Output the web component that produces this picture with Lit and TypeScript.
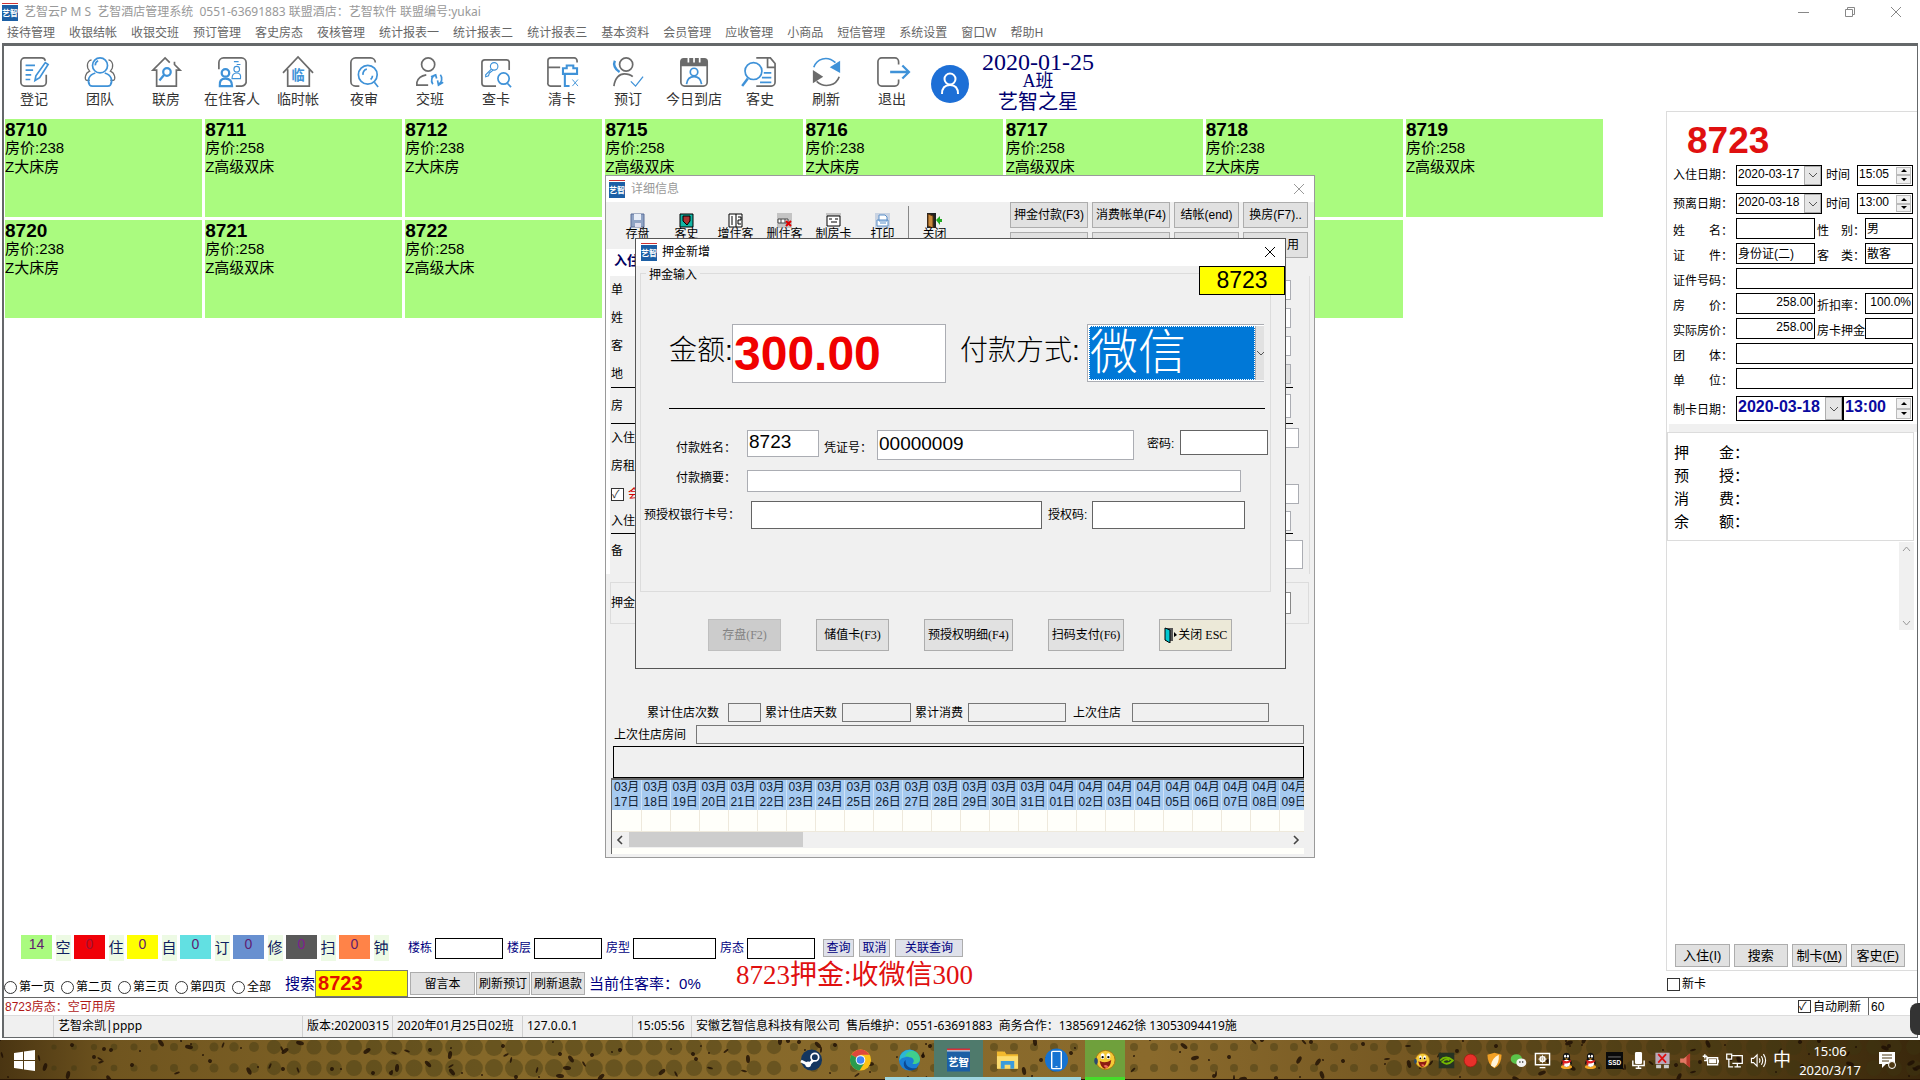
import { LitElement, html, svg, css, nothing } from "lit";
import { customElement } from "lit/decorators.js";
import { classMap } from "lit/directives/class-map.js";

const G = "#6b6b6b";
const B = "#3f92d8";

const menus = ["接待管理", "收银结帐", "收银交班", "预订管理", "客史房态", "夜核管理", "统计报表一", "统计报表二", "统计报表三", "基本资料", "会员管理", "应收管理", "小商品", "短信管理", "系统设置", "窗口W", "帮助H"];

const tools = [
  { label: "登记", art: svg`
    <path stroke=${G} d="M29 19V27a4 4 0 0 1-4 4H6a4 4 0 0 1-4-4V5a4 4 0 0 1 4-4H24a4 4 0 0 1 4 3"/>
    <path stroke=${B} d="M7 9H17M7 14H15M7 19H13M7 24H12M28 6l3 2-9 14-5 3 1-5z"/>` },
  { label: "团队", art: svg`
    <path stroke=${G} stroke-width="1.3" d="M7 3C2 4 1 11 5 15 0 17-1 24 2 25H5M25 3c5 1 6 8 2 12 5 2 6 9 3 10H27"/>
    <circle stroke=${B} cx="16" cy="9" r="8"/>
    <path stroke=${B} d="M11 17c-7 2-9 8-6 13q1 1 3 1H24q2 0 3-1c3-5 1-11-6-13M11 9a5 5 0 0 1 3-5"/>` },
  { label: "联房", art: svg`
    <path stroke=${G} d="M20 6 15 1 2 14H6V31H27V14h4L25 8V5"/>
    <circle stroke=${B} stroke-width="2.4" cx="17" cy="16" r="4"/>
    <path stroke=${B} stroke-width="2.4" d="M14 19l-5 6"/>` },
  { label: "在住客人", art: svg`
    <path stroke=${G} d="M2 13V6a5 5 0 0 1 5-5H26a5 5 0 0 1 5 5V25a5 5 0 0 1-5 6H20"/>
    <circle stroke=${B} stroke-width="2.4" cx="9" cy="17" r="4"/>
    <path stroke=${B} stroke-width="2.4" d="M3 31q-1-8 6-8t7 8z"/>
    <path stroke=${B} stroke-width="1.2" d="M16 23q0-6 5-6t4 6zM18 5h5M21 8h4"/>
    <circle stroke=${B} stroke-width="1.2" cx="21" cy="13" r="3"/>` },
  { label: "临时帐", art: svg`
    <path stroke=${G} d="M0 17 16 0l16 17M5 13V31H28V13"/>
    <text x="9" y="25" font-size="14" font-weight="700" fill=${B} stroke="none">临</text>` },
  { label: "夜审", art: svg`
    <path stroke=${G} d="M11 31H7a5 5 0 0 1-5-5V6a5 5 0 0 1 5-5H23a5 5 0 0 1 5 5"/>
    <circle stroke=${B} cx="20" cy="19" r="10"/>
    <path stroke=${B} d="M27 27l4 5M15 19a5 5 0 0 1 4-6M25 20a5 5 0 0 1-2 4"/>` },
  { label: "交班", art: svg`
    <circle stroke=${G} cx="14" cy="8" r="7"/>
    <path stroke=${G} d="M12 19C6 20 3 23 2 27V30H14"/>
    <path stroke=${B} d="M19 29a5 6 0 0 1 3-10M17 21l5-2 1 4M27 19a5 6 0 0 1-2 10M30 27l-5 3-1-5"/>` },
  { label: "查卡", art: svg`
    <path stroke=${G} d="M30 14V5a3 3 0 0 0-3-2H4a3 3 0 0 0-3 3V28a3 3 0 0 0 3 3H16"/>
    <circle stroke=${B} cx="24" cy="23" r="6"/>
    <path stroke=${B} d="M28 28l4 4"/>
    <circle stroke=${B} stroke-width="1.2" cx="14" cy="10" r="4"/>
    <path stroke=${B} stroke-width="1.2" d="M11 13l-6 6v2l3-1 1-3 4-3"/>` },
  { label: "清卡", art: svg`
    <path stroke=${G} d="M32 6V4a3 3 0 0 0-3-3H4a3 3 0 0 0-3 3V27a3 3 0 0 0 3 4H15M1 11H14"/>
    <path stroke=${B} stroke-width="2.2" d="M17 18V12h4V9h7v3h4v6zM19 18V31h5"/>
    <path stroke=${B} stroke-width="1" d="M27 24l6 7M33 24l-6 7"/>` },
  { label: "预订", art: svg`
    <circle stroke=${G} cx="14" cy="8" r="7"/>
    <path stroke=${G} d="M1 31C2 22 7 18 12 18q6 0 9 3"/>
    <path stroke=${B} stroke-width="2.6" d="M2 4C0 8 2 13 7 16"/>
    <path stroke=${B} stroke-width="1.4" d="M19 26l5 5 8-10"/>` },
  { label: "今日到店", art: svg`
    <path stroke=${G} d="M2 8V27a4 4 0 0 0 4 4H26a4 4 0 0 0 4-4V8"/>
    <path fill=${G} stroke=${G} d="M2 9V5q0-3 3-3H27q3 0 3 3V9z"/>
    <path stroke="#fff" d="M10 0V6M16 0V6M22 0V6"/>
    <circle stroke=${B} cx="16" cy="16" r="4"/>
    <path stroke=${B} d="M8 29q1-8 8-8t8 8"/>` },
  { label: "客史", art: svg`
    <path stroke=${G} d="M12 1H27M12 31H28a4 4 0 0 0 4-4V11H24V1H27l5 6v5"/>
    <circle stroke=${B} cx="9" cy="15" r="9"/>
    <path stroke=${B} stroke-width="2.6" d="M3 23l-6 8"/>
    <path stroke=${B} d="M20 17h8M18 22h10M16 27h12"/>` },
  { label: "刷新", art: svg`
    <path stroke=${B} d="M3 11C6 2 17-2 26 6"/><path fill=${B} stroke="none" d="M31 4V17L20 11z"/>
    <path stroke=${G} d="M30 21C27 30 15 34 6 26"/><path fill=${G} stroke="none" d="M2 28V14l11 7z"/>` },
  { label: "退出", art: svg`
    <path stroke=${G} d="M23 8V5a4 4 0 0 0-4-4H5a4 4 0 0 0-4 4V27a4 4 0 0 0 4 4H19a4 4 0 0 0 4-4V24"/>
    <path stroke=${B} stroke-width="2.4" d="M14 16H33M27 9l7 7-7 7"/>` },
];

const rooms: { no?: string; price?: string; kind?: string }[] = [
  { no: "8710", price: "238", kind: "Z大床房" },
  { no: "8711", price: "258", kind: "Z高级双床" },
  { no: "8712", price: "238", kind: "Z大床房" },
  { no: "8715", price: "258", kind: "Z高级双床" },
  { no: "8716", price: "238", kind: "Z大床房" },
  { no: "8717", price: "258", kind: "Z高级双床" },
  { no: "8718", price: "238", kind: "Z大床房" },
  { no: "8719", price: "258", kind: "Z高级双床" },
  { no: "8720", price: "238", kind: "Z大床房" },
  { no: "8721", price: "258", kind: "Z高级双床" },
  { no: "8722", price: "258", kind: "Z高级大床" },
  {}, {}, {}, {},
];

const legend = [
  ["14", "空", "green"], ["0", "住", "red"], ["0", "自", "yellow"], ["0", "订", "cyan"],
  ["0", "修", "blue"], ["0", "扫", "dark"], ["0", "钟", "orange"],
];

const days = Array.from({ length: 24 }, (_, i) => {
  const d = 17 + i;
  return d <= 31 ? ["03月", `${d}日`] : ["04月", `${String(d - 31).padStart(2, "0")}日`];
});

const caretDown = svg`<path d="M1 3l4 4 4-4" fill="none" stroke="#555"/>`;

const sheet = css`
  * { box-sizing: border-box; }
  button, input, select { font: inherit; color: inherit; margin: 0; padding: 0; border-radius: 0; }
  input { background: #fff; outline: none; min-width: 0; }
  .btn { background: #e1e1e1; border: 1px solid #adadad; white-space: nowrap; text-align: center; line-height: 16px; }
  .brand { width: 16px; height: 18px; flex: none; display: block; }
  svg { display: block; flex: none; }
`;

const brand = html`<svg class="brand" viewBox="0 0 16 18"><rect width="16" height="18" fill="#1c5fa5"/><rect width="16" height="2" fill="#c33"/><rect y="1" width="16" height="1" fill="#fff"/><text x="8" y="13" font-size="8" font-weight="700" text-anchor="middle" fill="#fff">艺智</text></svg>`;
const cross = html`<svg width="12" height="12" viewBox="0 0 12 12"><path d="M1 1l10 10M11 1 1 11" stroke="currentColor" fill="none"/></svg>`;

@customElement("deposit-dialog")
class DepositDialog extends LitElement {
  static styles = [sheet, css`
    :host { display: flex; flex-direction: column; background: #f0f0f0; border: 1px solid #555; font-size: 12px; line-height: 14px; }
    .title { display: flex; align-items: center; gap: 5px; height: 27px; padding: 0 9px 2px 5px; background: #fff; font-size: 12px; }
    .title span { flex: 1; }
    .close { border: 0; background: none; }
    .group { margin: 0 14px 0 4px; padding: 44px 0 0; height: 326px; border: 1px solid #dcdcdc; min-width: 0; }
    .group legend { padding: 2px 3px 0; margin-left: 5px; height: 14px; }
    .tag { position: absolute; right: 0; top: 27px; width: 86px; height: 29px; background: #ff0; border: 1px solid #000; font-size: 23px; line-height: 27px; text-align: center; }
    .row { display: flex; align-items: flex-start; }
    .row input { border: 1px solid #abadb3; }
    .row .dark { border-color: #646464; }
    .row label { flex: none; line-height: 32px; white-space: nowrap; }
    .big { margin-left: 28px; }
    .big label { font-size: 28px; line-height: 54px; font-weight: 300; }
    .amountL { width: 63px; }
    .methodL { width: 127px; margin-left: 14px; }
    .big .amount { width: 214px; height: 59px; font-size: 48px; font-weight: 700; color: #f00000; padding-left: 1px; }
    .method { width: 177px; height: 58px; border: 1px solid #abadb3; border-right: 0; background: #fff; padding: 1px 0; display: flex; }
    .method select { appearance: none; width: 166px; margin-left: 1px; height: 54px; border: 1px dotted #fff; background: #0078d7; color: #fff; font-size: 48px; font-weight: 300; line-height: 50px; outline: none; padding: 0; }
    .method i { flex: 1; background: #e1e1e1; border-left: 1px solid #abadb3; display: flex; align-items: center; overflow: hidden; }
    .rule { border: 0; height: 1px; background: #000; margin: 25px 5px 0 28px; }
    .r1 { margin: 21px 0 0 35px; height: 31px; }
    .r1 label { line-height: 36px; }
    .r2 { margin: 9px 0 0 35px; height: 22px; }
    .r2 label { line-height: 16px; }
    .r3 { margin: 9px 0 0 3px; height: 28px; }
    .r3 label { line-height: 28px; }
    .l71 { width: 71px; }
    .r1 input { font-size: 19px; padding: 0 0 3px 1px; }
    .name { width: 72px; height: 27px; margin-right: 5px; }
    .l53 { width: 53px; }
    .voucher { width: 257px; height: 30px; margin-right: 13px; }
    .l33 { width: 33px; }
    .r1 .l33 { line-height: 28px; }
    .pwd { width: 88px; height: 25px; }
    .memo { width: 494px; height: 22px; }
    .l107 { width: 107px; }
    .card { width: 291px; height: 28px; margin-right: 6px; }
    .l44 { width: 44px; }
    .auth { width: 153px; height: 28px; }
    .foot { display: flex; gap: 35px; padding: 27px 0 0 72px; }
    .foot .btn { height: 32px; padding: 0 3px; min-width: 73px; font-family: "Liberation Serif", "Noto Sans CJK SC", serif; display: flex; align-items: center; justify-content: center; }
    .foot .off { background: #ccc; border-color: #bfbfbf; color: #838383; }
    .foot .esc { background: #ece9d8; }
  `];
  render() {
    return html`
      <div class="title">${brand}<span>押金新增</span><button class="close" aria-label="关闭">${cross}</button></div>
      <div class="tag">8723</div>
      <fieldset class="group">
        <legend>押金输入</legend>
        <div class="row big">
          <label class="amountL" for="amount">金额:</label><input class="amount" id="amount" value="300.00">
          <label class="methodL" for="method">付款方式:</label>
          <div class="method"><select id="method"><option>微信</option></select><i><svg width="10" height="10" viewBox="0 0 10 10">${caretDown}</svg></i></div>
        </div>
        <hr class="rule">
        <div class="row r1">
          <label class="l71" for="pn">付款姓名：</label><input class="name" id="pn" value="8723">
          <label class="l53" for="vn">凭证号：</label><input class="voucher" id="vn" value="00000009">
          <label class="l33" for="pw">密码:</label><input class="pwd dark" id="pw" type="password">
        </div>
        <div class="row r2"><label class="l71" for="memo">付款摘要：</label><input class="memo" id="memo"></div>
        <div class="row r3">
          <label class="l107" for="card">预授权银行卡号：</label><input class="card dark" id="card">
          <label class="l44" for="auth">授权码:</label><input class="auth dark" id="auth">
        </div>
      </fieldset>
      <div class="foot">
        <button class="btn off" disabled>存盘(F2)</button><button class="btn">储值卡(F3)</button><button class="btn">预授权明细(F4)</button><button class="btn">扫码支付(F6)</button>
        <button class="btn esc"><svg width="14" height="16" viewBox="0 0 14 16"><path fill="#555" d="M1 1h8v13H1z"/><path fill="#00c8d0" stroke="#000" d="M1 1l5 2v13l-5-3z"/><path fill="#000" d="M10 5l3 3-3 2z"/></svg>关闭 ESC</button>
      </div>`;
  }
}

const dlgTools = [
  ["存盘", svg`<path fill="#8fa3c4" stroke="#5a6f99" d="M1 1h13v13H1z"/><path fill="#e8eef8" d="M4 1h7v6H4z"/><path fill="#dde" d="M5 10h6v4H5z"/>`],
  ["客史", svg`<path fill="#10b5a5" stroke="#000" d="M1 1h13v13H1z"/><path fill="#a33" stroke="#000" d="M4 3h7v5l-3 4-4-4z"/>`],
  ["增住客", svg`<path fill="#fff" stroke="#000" d="M1 1h13v13H1zM8 1v13M4 3v9M10 4h3v3h-3v4h3"/>`],
  ["删住客", svg`<path fill="#c4c4c4" d="M0 0h15v15H0z"/><path fill="#fff" stroke="#444" d="M1 6h10v4H1zM4 6v4M8 6v4"/><path stroke="#d00" stroke-width="2" d="M9 8l5 5M14 8l-5 5"/>`],
  ["制房卡", svg`<path fill="#c4c4c4" d="M0 0h15v3H0z"/><path fill="#fff" stroke="#000" d="M1 3h13v10H1z"/><path stroke="#000" d="M3 6h3M9 6h3M5 9h6"/>`],
  ["打印", svg`<path fill="#c9d3e2" d="M0 0h15v15H0z"/><path fill="#fff" stroke="#5b8fc9" d="M4 2h6l2 2v4H4zM2 7h11v6H2z"/><path stroke="#5b8fc9" d="M5 10h6"/>`],
  ["关闭", svg`<path fill="#222" d="M0 0h9v15H0z"/><path fill="#c98a3c" stroke="#5a3510" d="M1 1l5 2v12l-5-2z"/><path fill="#2a2" d="M9 7l4-4v3h2v3h-2v3z"/>`],
] as const;

const formRows: [string, string][] = [
  ["单", "h28"], ["姓", "h28"], ["客", "h28"], ["地", "h28 line gray"], ["房", "h36 line"],
  ["入住", "h28 w7"], ["房租", "h28 none"], ["会", "h28 w8 check"], ["入住", "h26 line"], ["备", "h40 w11"],
];

@customElement("detail-dialog")
class DetailDialog extends LitElement {
  static styles = [sheet, css`
    :host { display: flex; flex-direction: column; background: #f0f0f0; border: 1px solid #9a9a9a; font-size: 12px; line-height: 14px; }
    .title { display: flex; align-items: center; gap: 6px; height: 26px; padding: 0 9px 1px 3px; background: #fff; color: #999; }
    .title span { flex: 1; }
    .close { border: 0; background: none; }
    .bar { display: flex; height: 47px; padding: 0 6px 0 7px; }
    .tools { display: flex; flex: 1; padding-top: 11px; }
    .tools button { width: 49px; border: 0; background: none; display: flex; flex-direction: column; align-items: center; justify-content: flex-start; gap: 0; line-height: 13px; white-space: nowrap; }
    .sep { width: 1px; margin: -7px 1px 0; height: 46px; background: #888; }
    .actions { display: grid; grid-template-columns: 78px 78px 65px 65px; grid-auto-rows: 26px; gap: 4px; height: 46px; }
    .actions .btn { padding: 0; height: 26px; }
    .actions .end { text-align: right; padding-right: 8px; }
    .tabs { background: #fff; height: 27px; padding: 4px 8px; color: #000060; font-weight: 700; line-height: 16px; font-size: 13px; margin-right: 650px; white-space: nowrap; }
    .panel { margin: 0 4px 0 0; border-right: 1px solid #dcdcdc; border-left: 4px solid #fff; padding: 0 16px 0 1px; }
    .line1 { display: flex; align-items: center; padding-right: 2px; }
    .line1 span { width: 90px; display: flex; align-items: center; gap: 4px; }
    .line1 input.f { flex: 1; height: 20px; border: 1px solid #abadb3; }
    .h28 { height: 28px; } .h26 { height: 26px; } .h36 { height: 36px; } .h40 { height: 40px; }
    .h36 input.f { height: 24px; } .h40 input.f { height: 29px; }
    .h40 span { align-self: flex-start; padding-top: 10px; }
    .line { border-bottom: 1px solid #000; }
    .gray input.f { background: #e1e1e1; }
    .w7, .w8, .w11 { padding-right: 0; margin-right: -6px; }
    .w11 { margin-right: -10px; }
    .none input.f { visibility: hidden; }
    .check span { color: #d00000; }
    .check input[type=checkbox] { width: 13px; height: 13px; appearance: none; border: 1px solid #333; display: grid; }
    .check input[type=checkbox]::after { content: "✓"; color: #333; font-size: 11px; line-height: 11px; }
    .dep { display: flex; align-items: center; height: 42px; margin: 8px 5px 79px 4px; border: 1px solid #dcdcdc; padding: 0 17px 0 0; }
    .dep label { flex: none; width: 90px; } .dep input { flex: 1; height: 22px; border: 1px solid #888; }
    .stats { display: flex; align-items: center; padding-left: 41px; height: 19px; }
    .stats input, .last input { height: 19px; border: 1px solid #777; background: #f0f0f0; }
    .stats label { flex: none; margin: 0 5px 0 4px; }
    .stats .a { margin-right: 9px; margin-left: 0; }
    .stats .d { margin: 0 11px 0 7px; }
    .s1 { width: 33px; } .s2 { width: 69px; } .s3 { width: 98px; } .s4 { width: 137px; }
    .last { display: flex; align-items: center; height: 19px; margin: 3px 10px 0 8px; }
    .last label { width: 82px; } .last input { flex: 1; }
    .note { height: 32px; margin: 2px 10px 0 7px; border: 1px solid #000; }
    .cal { margin: 0 10px 3px 5px; border: 1px solid #666; border-width: 2px 0 0 1px; overflow: hidden; background: #fffffa; flex: 1; }
    table { border-collapse: collapse; table-layout: fixed; width: 696px; }
    th { background: #a6caf0; font: inherit; font-size: 12px; line-height: 15px; padding: 0; height: 30px; width: 29px; border-right: 1px solid #cfe2f6; white-space: nowrap; text-align: left; padding-left: 2px; color: #102030; }
    td { height: 21px; border-right: 1px solid #eee9dc; border-bottom: 1px solid #eee9dc; padding: 0; }
    .scroll { display: flex; justify-content: space-between; align-items: center; background: #f0f0f0; height: 16px; padding: 0 4px; }
    .thumb { width: 174px; height: 15px; background: #cdcdcd; margin: 0 auto 0 5px; }
  `];
  render() {
    return html`
      <div class="title">${brand}<span>详细信息</span><button class="close" aria-label="关闭">${cross}</button></div>
      <div class="bar">
        <div class="tools">${dlgTools.map(([t, a], i) => html`${i === 6 ? html`<div class="sep"></div>` : nothing}<button><svg width="15" height="15" viewBox="0 0 15 15" fill="none">${a}</svg>${t}</button>`)}</div>
        <div class="actions"><button class="btn">押金付款(F3)</button><button class="btn">消费帐单(F4)</button><button class="btn">结帐(end)</button><button class="btn">换房(F7)..</button>
          <button class="btn"></button><button class="btn"></button><button class="btn"></button><button class="btn end">用</button></div>
      </div>
      <div class="tabs">入住</div>
      <div class="panel">
        ${formRows.map(([t, c]) => html`<label class="line1 ${c}"><span>${c.includes("check") ? html`<input type="checkbox" checked>` : nothing}${t}</span><input class="f"></label>`)}
      </div>
      <div class="dep"><label for="dep">押金</label><input id="dep"></div>
      <div class="stats">
        <label class="a" for="s1">累计住店次数</label><input class="s1" id="s1" readonly><label for="s2">累计住店天数</label><input class="s2" id="s2" readonly><label for="s3">累计消费</label><input class="s3" id="s3" readonly><label class="d" for="s4">上次住店</label><input class="s4" id="s4" readonly>
      </div>
      <div class="last"><label for="last">上次住店房间</label><input id="last" readonly></div>
      <div class="note"></div>
      <div class="cal">
        <table><thead><tr>${days.map(([m, d]) => html`<th>${m}<br>${d}</th>`)}</tr></thead><tbody><tr>${days.map(() => html`<td></td>`)}</tr></tbody></table>
        <div class="scroll"><svg width="8" height="10" viewBox="0 0 8 10"><path d="M6 1 2 5l4 4" fill="none" stroke="#444" stroke-width="1.6"/></svg><div class="thumb"></div><svg width="8" height="10" viewBox="0 0 8 10"><path d="M2 1l4 4-4 4" fill="none" stroke="#444" stroke-width="1.6"/></svg></div>
      </div>`;
  }
}

@customElement("guest-panel")
class GuestPanel extends LitElement {
  static styles = [sheet, css`
    :host { display: flex; flex-direction: column; font-size: 12px; line-height: 14px; width: 251px; flex: none; padding-top: 65px; }
    .box { border: 1px solid #dcdcdc; border-right: 0; flex: 1; display: flex; flex-direction: column; }
    .room { font-size: 37px; line-height: 40px; font-weight: 700; color: #e01010; padding: 9px 0 0 20px; height: 52px; margin: 0; }
    .form { padding-left: 6px; padding-right: 4px; }
    .r { display: flex; align-items: center; height: 25px; }
    .r.t { height: 29px; padding-bottom: 7px; }
    .r.t:nth-child(2) { height: 25px; padding-bottom: 4px; }
    .r label { flex: none; width: 63px; white-space: nowrap; }
    .r label.s { width: 50px; padding-left: 2px; }
    .r label.tm { width: 35px; padding-left: 4px; }
    .r input { height: 21px; border: 1px solid #000; flex: 1; padding: 0 1px 3px; align-self: flex-start; }
    .r .m { flex: none; width: 79px; }
    .num { text-align: right; }
    .combo { display: flex; border: 1px solid #000; height: 21px; background: #fff; min-width: 0; }
    .r .combo input { border: 0; height: 19px; width: 0; flex: 1; }
    .combo.date { width: 86px; flex: none; }
    .combo.clock { flex: 1; }
    .dd { width: 17px; border: 1px solid #adadad; background: #e6e6e6; display: flex; align-items: center; justify-content: center; }
    .sp { width: 17px; flex: none; display: flex; flex-direction: column; padding: 1px; }
    .sp button { flex: 1; border: 1px solid #bbb; background: #f0f0f0; display: flex; align-items: center; justify-content: center; min-height: 0; }
    .r.make { margin-top: 3px; height: 27px; }
    .make .combo { height: 25px; align-self: flex-start; }
    .r.make .combo input { font-size: 16px; font-weight: 700; color: #0a0aa0; height: 22px; }
    .make .combo.date { width: 107px; }
    .band { height: 8px; background: #f0f0f0; margin: 1px 0 0 2px; }
    .sum { border: 1px solid #dcdcdc; margin: 0 3px 0 0; padding: 8px 0 7px 6px; font-size: 15px; line-height: 23px; }
    .list { flex: 1; display: flex; justify-content: flex-end; padding: 1px 3px 0 0; }
    .vs { width: 15px; height: 88px; background: #f0f0f0; display: flex; flex-direction: column; justify-content: space-between; align-items: center; padding: 4px 0; }
    .btns { display: flex; gap: 4px; padding: 0 12px 3px 8px; }
    .btns .btn { flex: 1; height: 23px; font-size: 13px; }
    .new { display: flex; align-items: center; gap: 2px; height: 26px; padding-left: 1px; }
    .new input { appearance: none; width: 13px; height: 13px; border: 1px solid #333; }
  `];
  date(id: string, v: string) {
    return html`<div class="combo date"><input id=${id} value=${v}><button class="dd" aria-label="选择日期"><svg width="10" height="10" viewBox="0 0 10 10">${caretDown}</svg></button></div>`;
  }
  clock(id: string, v: string) {
    return html`<div class="combo clock"><input id=${id} aria-label="时间" value=${v}><div class="sp"><button aria-label="增加"><svg width="6" height="3" viewBox="0 0 6 3"><path d="M0 3h6L3 0z"/></svg></button><button aria-label="减少"><svg width="6" height="3" viewBox="0 0 6 3"><path d="M0 0h6L3 3z"/></svg></button></div></div>`;
  }
  render() {
    const pair = (a: string, av: string, b: string, bv: string, num = false) => html`<div class="r"><label for=${"f" + a}>${a}</label><input class=${classMap({ m: true, num })} id=${"f" + a} value=${av}><label class="s" for=${"f" + b}>${b}</label><input class=${classMap({ num })} id=${"f" + b} value=${bv}></div>`;
    const one = (a: string) => html`<div class="r"><label for=${"f" + a}>${a}</label><input id=${"f" + a}></div>`;
    return html`
      <div class="box">
        <h1 class="room">8723</h1>
        <div class="form">
          <div class="r t"><label for="d1">入住日期：</label>${this.date("d1", "2020-03-17")}<label class="tm" for="t1">时间</label>${this.clock("t1", "15:05")}</div>
          <div class="r t"><label for="d2">预离日期：</label>${this.date("d2", "2020-03-18")}<label class="tm" for="t2">时间</label>${this.clock("t2", "13:00")}</div>
          ${pair("姓　　名：", "", "性　别：", "男")}
          ${pair("证　　件：", "身份证(二)", "客　类：", "散客")}
          ${one("证件号码：")}
          ${pair("房　　价：", "258.00", "折扣率：", "100.0%", true)}
          ${pair("实际房价：", "258.00", "房卡押金", "", true)}
          ${one("团　　体：")}
          ${one("单　　位：")}
          <div class="r make"><label for="d3">制卡日期：</label>${this.date("d3", "2020-03-18")}${this.clock("t3", "13:00")}</div>
        </div>
        <div class="band"></div>
        <div class="sum"><div>押　　金：</div><div>预　　授：</div><div>消　　费：</div><div>余　　额：</div></div>
        <div class="list"><div class="vs"><svg width="9" height="6" viewBox="0 0 9 6"><path d="M1 5l3.500-4L8 5" fill="none" stroke="#999"/></svg><svg width="9" height="6" viewBox="0 0 9 6"><path d="M1 1l3.500 4L8 1" fill="none" stroke="#999"/></svg></div></div>
        <div class="btns"><button class="btn">入住(I)</button><button class="btn">搜索</button><button class="btn">制卡(<u>M</u>)</button><button class="btn">客史(<u>F</u>)</button></div>
      </div>
      <label class="new"><input type="checkbox">新卡</label>`;
  }
}

const emoji = svg`<circle cx="12" cy="12" r="10" fill="#f5c936" stroke="#a87412"/><ellipse cx="9" cy="8" rx="2" ry="3" fill="#fff"/><ellipse cx="15" cy="8" rx="2" ry="3" fill="#fff"/><circle cx="9" cy="9" r="1.200"/><circle cx="15" cy="9" r="1.200"/><path d="M6 13q6 3 12-1-1 9-7 9-4-1-5-8z" fill="#8c1c12"/><path d="M10 18q3-2 5 1-2 3-5-1z" fill="#f26a5a"/><path d="M1 10q3-1 3 3t-2 4q-3-3-1-7z" fill="#2b4a6f"/>`;
const qq = svg`<ellipse cx="12" cy="21" rx="8" ry="3" fill="#f5a623"/><path d="M4 18q0-5 3-8Q6 1 12 1t5 9q3 3 3 8l-3-2q-1 5-5 5t-5-5z" fill="#111"/><ellipse cx="12" cy="16" rx="5" ry="5" fill="#fff"/><ellipse cx="10" cy="6" rx="1.500" ry="2" fill="#fff"/><ellipse cx="14" cy="6" rx="1.500" ry="2" fill="#fff"/><path d="M9 9h6l-3 2z" fill="#f5a623"/><path d="M6 11q6 4 12 0v3q-6 3-9 2v3H7z" fill="#e02020"/>`;

const apps = [
  ["steam", svg`<circle cx="12" cy="12" r="11" fill="#14365f"/><path d="M1 13l8 4 5-5" stroke="#fff" stroke-width="3" fill="none"/><circle cx="15.500" cy="9" r="4" fill="#14365f" stroke="#fff" stroke-width="1.800"/><circle cx="8.500" cy="16.500" r="3" fill="#fff"/>`],
  ["chrome", svg`<circle cx="12" cy="12" r="11" fill="#fbc116"/><path d="M12 12 2.500 6.500A11 11 0 0 1 21.500 6.500H12z" fill="#e0483c"/><path d="M12 12 2.500 6.500A11 11 0 0 0 11 23l5-8z" fill="#2a9b4e"/><circle cx="12" cy="12" r="5" fill="#fff"/><circle cx="12" cy="12" r="4" fill="#4285f4"/>`],
  ["edge on", svg`<circle cx="12" cy="12" r="11" fill="#1a7fd4"/><path d="M2 9C5-1 22-1 23 11c0 4-4 6-8 5 3-3 1-7-3-7-4-1-8 0-10 3z" fill="#3fcf8e"/><path d="M2 9C4 3 10 0 16 2 9 3 7 7 8 9 5 9 3 10 1 13z" fill="#2cb7d6"/><path d="M8 12c-1 7 6 10 12 8-5 5-14 3-14-4 0-2 1-3 2-4z" fill="#0c4a94"/>`],
  ["pms on", svg`<rect width="24" height="24" fill="#1c5fa5"/><rect width="24" height="2" fill="#d33"/><rect y="2" width="24" height="1" fill="#fff"/><text x="12" y="18" font-size="11" font-weight="700" text-anchor="middle" fill="#fff">艺智</text>`],
  ["files on", svg`<path d="M1 3h8l2 3h12v15H1z" fill="#f2b92e"/><path d="M1 8h22v13H1z" fill="#fcdc6f"/><path d="M5 21v-8h14v8h-4v-4H9v4z" fill="#3b9bdc"/>`],
  ["phone on", svg`<circle cx="12" cy="12" r="12" fill="#1673d2"/><rect x="7" y="3" width="10" height="18" rx="1" fill="#1673d2" stroke="#fff" stroke-width="1.500"/><path d="M11 19h2" stroke="#fff"/>`],
  ["face", emoji],
] as const;

const W = "#fff";
const tray = [
  emoji,
  svg`<rect x="1" y="1" width="22" height="22" fill="#263322"/><path d="M3 12q8-9 18 0-8 8-15 2 6-6 10-2" fill="none" stroke="#76b900" stroke-width="2.500"/>`,
  svg`<circle cx="12" cy="12" r="9" fill="#e8302a" stroke="#a01810"/>`,
  svg`<path d="M12 1l10 3q0 14-10 19Q2 18 2 4z" fill="#f2a024"/><path d="M18 4Q8 9 7 19l5 3Q19 16 18 4z" fill="#fff5dc"/>`,
  svg`<ellipse cx="9" cy="10" rx="8" ry="7" fill="#5bc24a"/><ellipse cx="16" cy="15" rx="7" ry="6" fill="#f2f2f2"/><circle cx="14" cy="14" r="1"/><circle cx="18" cy="14" r="1"/>`,
  svg`<path d="M2 2h20v16H2zM8 22h8" fill="none" stroke=${W} stroke-width="2"/><circle cx="12" cy="10" r="3.500" fill="none" stroke=${W} stroke-width="2"/><path d="M12 4v12M6 10h12M8 6l8 8M16 6l-8 8" stroke=${W}/>`,
  qq, qq,
  svg`<rect x="0" y="0" width="24" height="24" fill="#0a0a0a"/><text x="12" y="18" font-size="9" font-weight="700" text-anchor="middle" fill="#fff">SSD</text><path d="M3 7h18" stroke="#999"/>`,
  svg`<rect x="7" y="0" width="10" height="17" rx="2" fill=${W}/><path d="M4 12v7h16v-7M12 19v4M8 23h8" fill="none" stroke=${W} stroke-width="2"/>`,
  svg`<rect x="2" y="1" width="20" height="16" fill="#b9a9b8"/><path d="M6 3l11 12M17 3L6 15" stroke="#d11" stroke-width="2.500"/><path d="M3 18h7v5H3zM14 18h7v5h-7z" fill="#ccc"/>`,
  svg`<path d="M3 9h5l9-7v20l-9-7H3z" fill="#e27763"/><path d="M12 6l5-4v20l-5-4z" fill="#b8392a"/>`,
  svg`<path d="M8 8h14v10H8zM23 11v4M1 6h6M4 3v6M7 6v6M3 12h4" fill="none" stroke=${W} stroke-width="2"/><path d="M10 10h10v6H10z" fill=${W}/>`,
  svg`<path d="M9 5h14v11H9M12 21h9M16 16v5M1 3h7v7H1zM4 10v11h6" fill="none" stroke=${W} stroke-width="1.800"/>`,
  svg`<path d="M2 9h3l5-5v16l-5-5H2zM13 9q2 3 0 6M16 6q4 6 0 12M19 3q6 9 0 18" fill="none" stroke=${W} stroke-width="1.600"/>`,
];

const dots = Array.from({ length: 95 }, (_, i) => {
  const x = 54 + i * 20;
  const r = x < 260 ? 2 + (x / 260) * 3 : x < 780 ? 7 + 2 * Math.sin((x - 260) / 170) : x < 1380 ? 4 : 8;
  return { x, r };
});
const specks = Array.from({ length: 190 }, (_, i) => ({
  x: (i * 397 + ((i * i * 31) % 97)) % 1920, y: (i * 23 + ((i * i) % 17)) % 40, a: 1 + ((i * 7) % 4), b: 1 + ((i * 5) % 2), t: (i * 47) % 180,
}));

@customElement("task-bar")
class TaskBar extends LitElement {
  static styles = [sheet, css`
    :host { display: flex; align-items: stretch; height: 40px; position: relative; overflow: hidden; background: linear-gradient(90deg, #4a3512, #70551f 6%, #856829 25%, #8a6a2c 60%, #6b4f1e 80%, #4d3812 92%, #3a280c); color: #fff; font-size: 12px; line-height: 18px; }
    .art { position: absolute; inset: 0; width: 100%; height: 100%; }
    button { border: 0; background: none; display: flex; align-items: center; justify-content: center; position: relative; }
    .start { width: 48px; }
    .side { flex: 1; display: flex; }
    .side.r { justify-content: flex-end; }
    .apps { display: flex; width: 344px; margin-right: 2px; }
    .apps button { width: 49px; }
    .apps .on { border-bottom: 3px solid #9fd6e0; padding-top: 3px; }
    .pms { background: #4f7a6c; }
    .apps .face { width: 40px; margin-left: 4px; padding-top: 3px; background: #6fa03c; border-bottom: 3px solid #45dd2a; }
    .tray { display: flex; align-items: center; }
    .tray button { width: 24px; }
    .tray .ime { font-size: 18px; }
    .clock { width: 72px; text-align: center; padding-top: 2px; position: relative; font: 13px/19px "Noto Sans", sans-serif; white-space: nowrap; }
    .note { width: 42px; margin-right: 12px; }
  `];
  render() {
    return html`
      <svg class="art" viewBox="0 0 1920 40" preserveAspectRatio="none">
        ${dots.map((d) => svg`<g fill="#3d3712" opacity="0.4"><circle cx=${d.x} cy="7" r=${d.r}/><circle cx=${d.x} cy="28" r=${d.r}/></g>`)}
        ${specks.map((s) => svg`<ellipse cx=${s.x} cy=${s.y} rx=${s.a} ry=${s.b} fill="#1d0e04" opacity="0.8" transform="rotate(${s.t} ${s.x} ${s.y})"/>`)}
        <path d="M0 39.500H1920" stroke="#2a1606"/>
      </svg>
      <div class="side"><button class="start" aria-label="开始"><svg width="21" height="21" viewBox="0 0 21 21" fill="#fff"><path d="M0 3l9-1.300V10H0zM10 1.500 21 0v10H10zM0 11h9v8.300L0 18zM10 11h11v10l-11-1.500z"/></svg></button></div>
      <div class="apps">${apps.map(([c, a]) => html`<button class=${c} aria-label=${c}><svg width="23" height="24" viewBox="0 0 24 24">${a}</svg></button>`)}</div>
      <div class="side r">
        <div class="tray">${tray.map((a) => html`<button aria-label="托盘"><svg width="17" height="17" viewBox="0 0 24 24">${a}</svg></button>`)}<button class="ime">中</button></div>
        <div class="clock">15:06<br>2020/3/17</div>
        <button class="note" aria-label="通知"><svg width="17" height="17" viewBox="0 0 17 17"><path d="M0 0h16v12H7l-4 4v-4H0z" fill="#fff"/><path d="M3 3h10M3 6h10M3 9h7" stroke="#4d3812"/><circle cx="13" cy="13" r="3.500" fill="#4d3812" stroke="#fff"/></svg></button>
      </div>`;
  }
}

@customElement("app-root")
class AppRoot extends LitElement {
  static styles = [sheet, css`
    :host { display: flex; flex-direction: column; min-height: 100vh; position: relative; background: #fff; color: #000; font-family: "Liberation Sans", "Noto Sans CJK SC", sans-serif; font-size: 12px; line-height: 14px; overflow: hidden; }
    .title { display: flex; align-items: center; gap: 6px; height: 23px; padding: 0 18px 0 2px; color: #999; font-family: "Noto Sans", "Noto Sans CJK SC", sans-serif; }
    .title p { flex: 1; margin: 0; white-space: pre; }
    .win { display: flex; gap: 34px; }
    .win button { border: 0; background: none; color: #888; }
    .menu { display: flex; gap: 14px; height: 20px; align-items: center; padding: 0 0 0 7px; color: #666; font-family: "Noto Sans", "Noto Sans CJK SC", sans-serif; }
    .menu a { color: inherit; text-decoration: none; white-space: nowrap; }
    .frame { flex: 1; margin: 0 2px 2px; border: solid #65686a; border-width: 3px 1px 1px 2px; display: flex; flex-direction: column; }
    .body { flex: 1; display: flex; }
    .left { flex: 1; display: flex; flex-direction: column; min-width: 0; }
    .tools { display: flex; gap: 6px; height: 73px; }
    .tool { width: 60px; border: 0; background: none; display: flex; flex-direction: column; align-items: center; justify-content: flex-start; padding-top: 10px; font: 14px/20px "Noto Sans CJK SC", sans-serif; color: #333; white-space: nowrap; }
    .tool svg { overflow: visible; fill: none; stroke-width: 1.8; }
    .user { margin: 19px 0 0 3px; }
    .shift { text-align: center; color: #000070; font: 20px/20px "Liberation Serif", "Noto Sans CJK SC", serif; width: 126px; padding-top: 7px; }
    .shift b { display: block; font-weight: 400; font-size: 24px; line-height: 18px; }
    .shift p { margin: 0; font-size: 18px; line-height: 21px; }
    .rooms { display: grid; grid-template-columns: repeat(8, 1fr); grid-auto-rows: 98px; gap: 3px; padding: 0 63px 0 1px; }
    .tile { background: #aafb7f; font-size: 15px; line-height: 19px; overflow: hidden; }
    .tile b { display: block; font-size: 19px; line-height: 17px; padding-top: 2px; }
    .fill { flex: 1; }
    .filters { display: flex; align-items: center; height: 24px; padding-left: 17px; color: #000080; }
    .lg { display: flex; width: 53px; }
    .lg i { width: 31px; height: 24px; font: 14px/19px "Liberation Sans", sans-serif; text-align: center; color: #602070; }
    .lg span { font-size: 15px; line-height: 26px; width: 22px; text-align: center; color: #102060; background: linear-gradient(90deg, #fff 4px, #edfae4 4px 19px, #fff 19px); }
    .green { background: #aafb7f; } .red { background: #f00008; } .yellow { background: #ff0; } .cyan { background: #62e0e2; } .blue { background: #6890d0; } .dark { background: #595959; } .orange { background: #ff8348; }
    .lg .red { color: #a01030; } .lg .dark { color: #802090; }
    .ff { display: flex; align-items: center; gap: 3px; margin-left: 4px; }
    .ff.first { margin-left: 16px; }
    .ff input { width: 68px; height: 21px; border: 1px solid #000; }
    .ff.wide input { width: 83px; }
    .q { margin-left: 5px; height: 18px; width: 31px; background: #dfe1ea; }
    .q.first { margin-left: 8px; } .q.wide { width: 68px; }
    .pages { display: flex; align-items: center; height: 27px; margin-top: 10px; }
    .pages .rd { display: flex; align-items: center; gap: 2px; margin-right: 6px; white-space: nowrap; padding-top: 7px; }
    .rd input { appearance: none; width: 13px; height: 13px; border: 1px solid #333; border-radius: 50%; }
    .find { font-size: 15px; color: #000080; margin-left: 8px; }
    .key { width: 93px; height: 27px; background: #ff0; border: 1px solid #777; font-size: 20px; font-weight: 700; color: #e01000; padding: 0 0 0 2px; margin-right: 2px; }
    .pages .btn { height: 23px; width: 54px; margin-right: 1px; }
    .pages .msg { width: 65px; }
    .rate { font-size: 15px; color: #000080; margin-left: 3px; width: 147px; white-space: nowrap; }
    .toast { color: #e01010; font: 27px/10px "Liberation Serif", "Noto Sans CJK SC", serif; align-self: flex-start; white-space: nowrap; }
    .info { display: flex; height: 18px; border-top: 1px solid #666; }
    .info p { margin: 0; flex: 1; color: #b01818; font-size: 12px; line-height: 18px; padding-left: 1px; }
    .auto { display: flex; align-items: center; gap: 2px; width: 70px; background: #fff; white-space: nowrap; }
    .auto input { appearance: none; width: 13px; height: 13px; border: 1px solid #333; display: grid; flex: none; }
    .auto input::after { content: "✓"; font-size: 11px; line-height: 11px; }
    .sec { width: 49px; border: 0; border-left: 1px solid #666; padding-left: 2px; font-size: 12px; }
    .status { display: flex; height: 22px; background: #f0f0f0; font: 12px/20px "Noto Sans", "Noto Sans CJK SC", sans-serif; border-top: 1px solid #dcdcdc; white-space: pre; }
    .status span { border-left: 1px solid #d0d0d0; padding-left: 4px; }
    .c0 { width: 49px; } .c1 { width: 249px; } .c2 { width: 90px; } .c3 { width: 130px; } .c4 { width: 110px; } .c5 { width: 59px; }
    .status .c0 { border: 0; }
    detail-dialog { position: absolute; left: 605px; top: 175px; width: 710px; height: 683px; }
    deposit-dialog { position: absolute; left: 635px; top: 238px; width: 651px; height: 431px; }
    .knob { position: absolute; right: 0; top: 1003px; width: 10px; height: 32px; border-radius: 8px 0 0 8px; background: #333; }
  `];
  render() {
    return html`
      <header class="title">${brand}<p>艺智云P M S  艺智酒店管理系统  0551-63691883 联盟酒店：艺智软件 联盟编号:yukai</p>
        <div class="win">
          <button aria-label="最小化"><svg width="12" height="12" viewBox="0 0 12 12"><path d="M0 6.500h11" stroke="currentColor"/></svg></button>
          <button aria-label="还原"><svg width="12" height="12" viewBox="0 0 12 12" fill="none" stroke="currentColor"><path d="M1.500 3.500h7v7h-7zM3.500 3V1.500h7v7H9"/></svg></button>
          <button aria-label="关闭">${cross}</button>
        </div>
      </header>
      <nav class="menu">${menus.map((m) => html`<a href="#">${m}</a>`)}</nav>
      <main class="frame">
        <div class="body">
          <div class="left">
            <div class="tools">
              ${tools.map((t) => html`<button class="tool"><svg width="31" height="32" viewBox="0 0 33 32">${t.art}</svg>${t.label}</button>`)}
              <svg class="user" width="38" height="38" viewBox="0 0 38 38"><circle cx="19" cy="19" r="19" fill="#1d6fd6"/><circle cx="19" cy="14" r="5.500" fill="none" stroke="#fff" stroke-width="2"/><path d="M11 29q0-9 8-9t8 9" fill="none" stroke="#fff" stroke-width="2"/></svg>
              <div class="shift"><b>2020-01-25</b><p>A班</p>艺智之星</div>
            </div>
            <div class="rooms">${rooms.map((r) => html`<div class="tile">${r.no ? html`<b>${r.no}</b>房价:${r.price}<br>${r.kind}` : nothing}</div>`)}</div>
            <div class="fill"></div>
            <div class="filters">
              ${legend.map(([n, t, c]) => html`<div class="lg"><i class=${c}>${n}</i><span>${t}</span></div>`)}
              <label class="ff first">楼栋<input></label><label class="ff">楼层<input></label><label class="ff wide">房型<input></label><label class="ff">房态<input></label>
              <button class="btn q first">查询</button><button class="btn q">取消</button><button class="btn q wide">关联查询</button>
            </div>
            <div class="pages">
              ${["第一页", "第二页", "第三页", "第四页", "全部"].map((p) => html`<label class="rd"><input type="radio" name="page">${p}</label>`)}
              <label class="find" for="key">搜索</label><input class="key" id="key" value="8723">
              <button class="btn msg">留言本</button><button class="btn">刷新预订</button><button class="btn">刷新退款</button>
              <span class="rate">当前住客率：0%</span>
              <span class="toast">8723押金:收微信300</span>
            </div>
          </div>
          <guest-panel></guest-panel>
        </div>
        <div class="info"><p>8723房态：空可用房</p><label class="auto"><input type="checkbox" checked>自动刷新</label><input class="sec" aria-label="刷新间隔" value="60"></div>
        <footer class="status"><span class="c0"></span><span class="c1">艺智余凯|pppp</span><span class="c2">版本:20200315</span><span class="c3">2020年01月25日02班</span><span class="c4">127.0.0.1</span><span class="c5">15:05:56</span><span>安徽艺智信息科技有限公司  售后维护：0551-63691883  商务合作：13856912462徐 13053094419施</span></footer>
      </main>
      <task-bar></task-bar>
      <detail-dialog></detail-dialog>
      <deposit-dialog></deposit-dialog>
      <div class="knob"></div>`;
  }
}
